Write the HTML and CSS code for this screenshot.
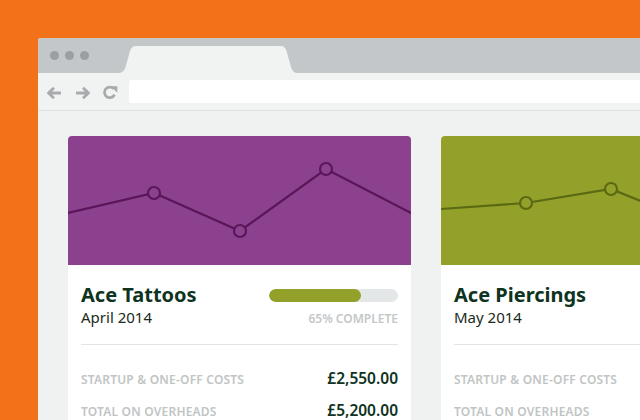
FILE: index.html
```html
<!DOCTYPE html>
<html>
<head>
<meta charset="utf-8">
<link rel="stylesheet" href="styles.css">
</head>
<body>
<div class="browser">
  <div class="titlebar">
    <div class="dots"><span></span><span></span><span></span></div>
    <svg class="tab" width="180" height="27" viewBox="0 0 180 27">
      <path d="M0 27 C4 27 6 25 7.5 21 L12 5 C13 2 14.5 0 18 0 L163 0 C166 0 167.5 2 168.5 5 L173 21 C174.5 25 176 27 180 27 Z" fill="#f1f2f2"/>
    </svg>
  </div>
  <div class="toolbar">
    <div class="navicons">
      <svg width="16" height="14" viewBox="0 0 16 14"><path d="M15 7 H3 M8 1.8 L2.6 7 L8 12.2" fill="none" stroke="#a8abad" stroke-width="2.8"/></svg>
      <svg width="16" height="14" viewBox="0 0 16 14"><path d="M1 7 H13 M8 1.8 L13.4 7 L8 12.2" fill="none" stroke="#a8abad" stroke-width="2.8"/></svg>
      <svg class="reload" width="16" height="16" viewBox="0 0 16 16"><path d="M12.6 9.6 A5.3 5.3 0 1 1 11.8 3.9" fill="none" stroke="#a8abad" stroke-width="2.8"/><path d="M8.6 1.2 L15.4 1.2 L15.4 7.8 Z" fill="#a8abad"/></svg>
    </div>
    <div class="address"></div>
  </div>
  <div class="content">
    <div class="card">
      <div class="chart purple">
        <svg width="343" height="129" viewBox="0 0 343 129">
          <polyline points="0,77 86,57 172,95 258,33 343,77" fill="none" stroke="#5a1658" stroke-width="2.2"/>
          <circle cx="86" cy="57" r="6" fill="#8b418e" stroke="#5a1658" stroke-width="2.2"/>
          <circle cx="172" cy="95" r="6" fill="#8b418e" stroke="#5a1658" stroke-width="2.2"/>
          <circle cx="258" cy="33" r="6" fill="#8b418e" stroke="#5a1658" stroke-width="2.2"/>
        </svg>
      </div>
      <div class="body">
        <div class="head">
          <div class="names">
            <div class="title">Ace Tattoos</div>
            <div class="date">April 2014</div>
          </div>
          <div class="progress">
            <div class="track"><div class="fill" style="width:71%"></div></div>
            <div class="plabel">65% Complete</div>
          </div>
        </div>
        <div class="divider"></div>
        <div class="row"><span class="label">Startup &amp; one-off costs</span><span class="amount">£2,550.00</span></div>
        <div class="row"><span class="label">Total on overheads</span><span class="amount">£5,200.00</span></div>
      </div>
    </div>
    <div class="card">
      <div class="chart green">
        <svg width="343" height="129" viewBox="0 0 343 129">
          <polyline points="0,73 85,67 170,53 256,88 343,60" fill="none" stroke="#5a6a12" stroke-width="2.2"/>
          <circle cx="85" cy="67" r="6" fill="#93a02a" stroke="#5a6a12" stroke-width="2.2"/>
          <circle cx="170" cy="53" r="6" fill="#93a02a" stroke="#5a6a12" stroke-width="2.2"/>
          <circle cx="256" cy="88" r="6" fill="#93a02a" stroke="#5a6a12" stroke-width="2.2"/>
        </svg>
      </div>
      <div class="body">
        <div class="head">
          <div class="names">
            <div class="title">Ace Piercings</div>
            <div class="date">May 2014</div>
          </div>
          <div class="progress">
            <div class="track"><div class="fill" style="width:40%"></div></div>
            <div class="plabel">40% Complete</div>
          </div>
        </div>
        <div class="divider"></div>
        <div class="row"><span class="label">Startup &amp; one-off costs</span><span class="amount">£1,200.00</span></div>
        <div class="row"><span class="label">Total on overheads</span><span class="amount">£3,400.00</span></div>
      </div>
    </div>
  </div>
</div>
</body>
</html>
```

FILE: styles.css
```css
html, body {
  margin: 0;
  padding: 0;
  overflow: hidden;
}
body {
  width: 640px;
  height: 420px;
  background: #f37219;
  font-family: "Noto Sans", "Open Sans", sans-serif;
}
.browser {
  margin: 38px 0 0 38px;
  width: 700px;
  height: 420px;
  background: #f0f2f1;
  border-top-left-radius: 3px;
  overflow: hidden;
}
.titlebar {
  height: 35px;
  background: #c4c7ca;
  display: flex;
  align-items: flex-end;
}
.dots {
  display: flex;
  gap: 6px;
  align-self: flex-start;
  margin: 13px 0 0 12px;
}
.dots span {
  width: 9px;
  height: 9px;
  border-radius: 50%;
  background: #9c9fa2;
}
.tab {
  display: block;
  margin-left: 29px;
}
.toolbar {
  height: 37px;
  background: #f1f2f2;
  border-bottom: 1px solid #dfe2e2;
  display: flex;
  align-items: flex-start;
}
.navicons {
  display: flex;
  align-items: center;
  gap: 13px;
  margin: 12px 0 0 8px;
  width: 83px;
}
.navicons svg {
  display: block;
}
.navicons .reload {
  margin-left: -2px;
}
.address {
  margin-top: 7px;
  height: 23px;
  flex: 1;
  background: #ffffff;
  border-radius: 3px 0 0 3px;
}
.content {
  display: flex;
  gap: 30px;
  padding: 25px 0 0 30px;
}
.card {
  flex: 0 0 343px;
  width: 343px;
  background: #ffffff;
  border-radius: 4px 4px 0 0;
  overflow: hidden;
}
.chart {
  height: 129px;
}
.chart svg {
  display: block;
}
.purple { background: #8b418e; }
.green { background: #93a02a; }
.body {
  padding: 18px 13px 20px;
}
.head {
  display: flex;
  justify-content: space-between;
}
.title {
  font-size: 20px;
  line-height: 24px;
  font-weight: 700;
  color: #0e3320;
}
.date {
  font-size: 15px;
  line-height: 20px;
  color: #1b2a21;
}
.progress {
  width: 129px;
  padding-top: 6px;
}
.track {
  height: 13px;
  border-radius: 7px;
  background: #e4e7e7;
  overflow: hidden;
}
.fill {
  height: 13px;
  border-radius: 7px;
  background: #93a02a;
}
.plabel {
  margin-top: 10px;
  font-size: 12px;
  line-height: 14px;
  font-weight: 600;
  text-align: right;
  text-transform: uppercase;
  color: #c4c8c8;
}
.divider {
  margin-top: 17px;
  height: 1px;
  background: #e3e5e5;
}
.row {
  display: flex;
  justify-content: space-between;
  align-items: baseline;
  line-height: 30px;
}
.divider + .row {
  margin-top: 18px;
}
.label {
  font-size: 12px;
  font-weight: 600;
  letter-spacing: 0.2px;
  text-transform: uppercase;
  color: #c0c5c4;
}
.amount {
  font-size: 15.5px;
  font-weight: 600;
  color: #0e3320;
}
```
